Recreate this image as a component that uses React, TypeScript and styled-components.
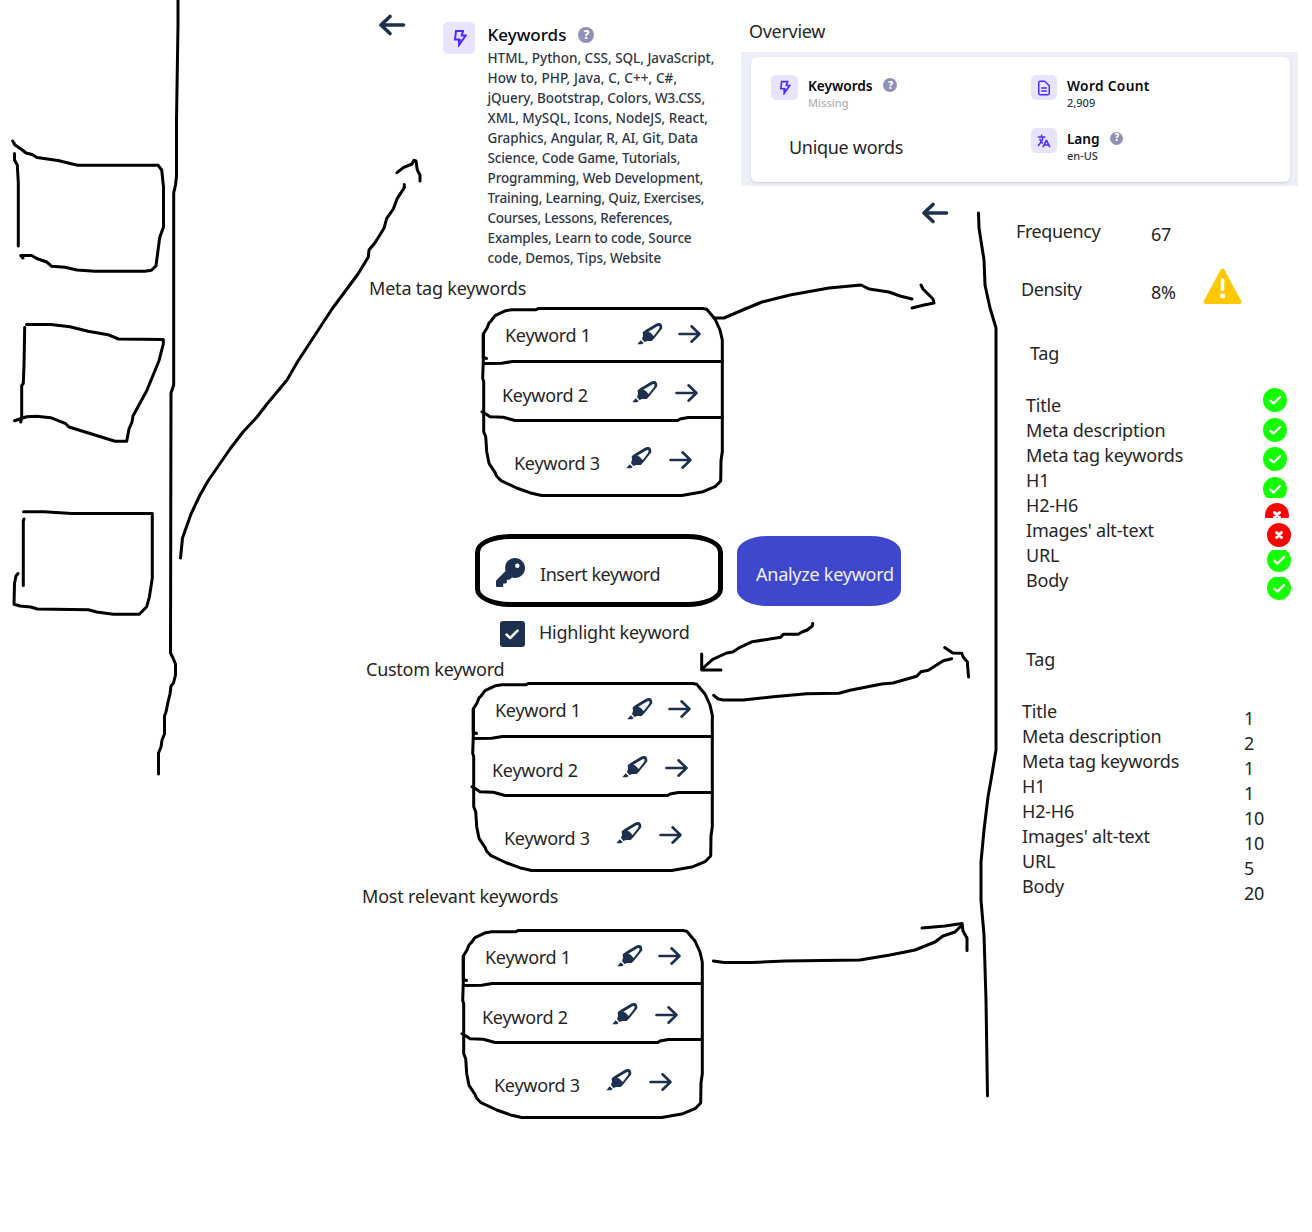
import React from "react";
import styled, { createGlobalStyle } from "styled-components";
import { FaKey } from "react-icons/fa6";
import { HiOutlineDocumentText, HiTranslate } from "react-icons/hi";

const NAVY = "#1d3050";
const VIOLET = "#4a2cff";

const GlobalStyle = createGlobalStyle`
  * { box-sizing: border-box; }
  body { margin: 0; background: #fff; }
`;

const Board = styled.main`
  position: relative;
  display: grid;
  grid-template-columns: 360px 381px 571px;
  width: 1312px;
  height: 1232px;
  overflow: hidden;
  background: #fff;
  color: #262626;
  font-family: "Noto Sans", "Open Sans", sans-serif;
`;

const InkLayer = styled.svg`
  position: absolute;
  inset: 0;
  fill: none;
  stroke: #000;
  stroke-width: 3;
  stroke-linecap: round;
  stroke-linejoin: round;
  pointer-events: none;
`;

const Column = styled.section`
  display: flex;
  flex-direction: column;
  min-width: 0;
`;

const Label = styled.div<{ $x?: number; $top?: number; $tone?: string; $track?: number }>`
  flex: none;
  margin-left: ${(p) => p.$x ?? 0}px;
  margin-top: ${(p) => p.$top ?? 0}px;
  color: ${(p) => p.$tone ?? "#262626"};
  font-size: 18px;
  line-height: 25px;
  letter-spacing: ${(p) => p.$track ?? -0.2}px;
  white-space: nowrap;
`;

/* ---------- Keywords summary ---------- */

const Summary = styled.div`
  display: flex;
  align-items: flex-start;
  height: 276px;
  padding: 14px 0 0 18px;
`;

const IconTile = styled.div<{ $w: number; $h: number; $top?: number }>`
  display: flex;
  flex: none;
  align-items: center;
  justify-content: center;
  width: ${(p) => p.$w}px;
  height: ${(p) => p.$h}px;
  margin-top: ${(p) => p.$top ?? 0}px;
  border-radius: 5px;
  background: #e8e4ff;
  color: ${VIOLET};
`;

const SummaryTile = styled(IconTile)`
  margin-left: 37px;
  padding: 0 0 1px 1px;
`;

const SummaryBody = styled.div`
  margin: 7px 0 0 12.5px;
`;

const SummaryHead = styled.div`
  display: flex;
  align-items: center;
  gap: 12px;
  height: 27px;
  color: #050510;
  font-size: 17px;
  font-weight: 500;
  letter-spacing: 0;
`;

const SummaryLine = styled.div<{ $track: number }>`
  color: #2f3747;
  font-size: 13.5px;
  font-weight: 500;
  line-height: 20px;
  letter-spacing: ${(p) => p.$track}px;
  white-space: nowrap;
`;

const Help = styled.span<{ $size: number }>`
  display: flex;
  flex: none;
  align-items: center;
  justify-content: center;
  width: ${(p) => p.$size}px;
  height: ${(p) => p.$size}px;
  border-radius: 50%;
  background: #9390b8;
  color: #fff;
  font-size: ${(p) => p.$size * 0.75}px;
  font-weight: 800;
  line-height: 1;
`;

/* ---------- Keyword list ---------- */

const ListBox = styled.div<{ $x: number; $top: number }>`
  position: relative;
  display: grid;
  grid-template-rows: 55px 57px 77px;
  flex: none;
  width: 242px;
  height: 189px;
  margin: ${(p) => p.$top}px 0 0 ${(p) => p.$x}px;
`;

const ListOutline = styled.svg`
  position: absolute;
  left: -3px;
  top: -3px;
  fill: none;
  stroke: #000;
  stroke-width: 3;
  stroke-linecap: round;
  stroke-linejoin: round;
`;

const ListRow = styled.div<{ $x: number; $top: number; $labelWidth: number; $gap: number }>`
  display: grid;
  grid-template-columns: ${(p) => p.$labelWidth}px ${(p) => 26 + p.$gap}px 24px;
  align-items: start;
  padding: ${(p) => p.$top}px 0 0 ${(p) => p.$x}px;
`;

const IconSlot = styled.span<{ $drop: number }>`
  display: flex;
  margin-top: ${(p) => p.$drop}px;
  color: ${NAVY};
`;

/* ---------- Keyword form ---------- */

const FormRow = styled.div`
  display: flex;
  flex: none;
  width: 426px;
  margin: 38px 0 0 115px;
`;

const InsertField = styled.div`
  display: flex;
  align-items: center;
  width: 248px;
  height: 73px;
  padding: 4px 0 0 16px;
  border: 5px solid #000;
  border-radius: 36px / 18px;
  color: ${NAVY};
`;

const AnalyzeButton = styled.button`
  display: flex;
  align-items: center;
  width: 164px;
  height: 70px;
  margin: 2px 0 0 14px;
  padding: 7px 0 0 19px;
  border: 0;
  border-radius: 30px / 16px;
  background: #3f48cc;
  font-family: inherit;
`;

const HighlightRow = styled.div`
  display: flex;
  flex: none;
  height: 26px;
  margin: 14px 0 0 139.5px;
`;

const CheckSquare = styled.span`
  display: flex;
  align-items: center;
  justify-content: center;
  width: 25.5px;
  height: 26px;
  border-radius: 3px;
  background: ${NAVY};
`;

/* ---------- Overview ---------- */

const OverviewBand = styled.div`
  flex: none;
  width: 557px;
  height: 134px;
  margin-top: 8px;
  padding: 5px 8px 4px 10px;
  background: #eceff7;
`;

const OverviewCard = styled.div`
  display: grid;
  grid-template-columns: 260px 1fr;
  height: 125px;
  padding: 18px 0 0 20px;
  border-radius: 6px;
  background: #fff;
  box-shadow: 0 1px 2px rgba(40, 50, 90, 0.18);
`;

const Metric = styled.div<{ $top?: number }>`
  display: flex;
  align-items: flex-start;
  height: 36px;
  margin-top: ${(p) => p.$top ?? 0}px;
`;

const MetricText = styled.div`
  margin: 0 0 0 10px;
`;

const MetricTitle = styled.div<{ $track?: number }>`
  display: flex;
  align-items: center;
  gap: 11px;
  height: 20px;
  color: #050510;
  font-size: 13.7px;
  font-weight: 600;
  letter-spacing: ${(p) => p.$track ?? 0}px;
`;

const MetricValue = styled.div<{ $muted?: boolean }>`
  color: ${(p) => (p.$muted ? "#b0b0b0" : "#2f3747")};
  font-size: 11px;
  font-weight: 500;
  line-height: 15px;
`;

/* ---------- Details ---------- */

const BackRow = styled.div`
  height: 22px;
  margin: 16px 0 0 180px;
`;

const StatRow = styled.div<{ $x: number; $top: number; $labelWidth: number }>`
  display: grid;
  grid-template-columns: ${(p) => p.$labelWidth}px 52px 40px;
  flex: none;
  height: 28px;
  margin: ${(p) => p.$top}px 0 0 ${(p) => p.$x}px;
`;

const WarningIcon = styled.svg`
  margin-top: -10px;
`;

const TagTable = styled.div<{ $x: number; $top: number }>`
  display: flex;
  align-items: flex-start;
  flex: none;
  height: 216px;
  margin: ${(p) => p.$top}px 0 0 ${(p) => p.$x}px;
`;

const TagNames = styled.div<{ $w: number }>`
  width: ${(p) => p.$w}px;
`;

const TagLine = styled(Label)`
  line-height: 24.93px;
`;

const Values = styled.div`
  padding-top: 7px;
`;

const StatusColumn = styled.div`
  margin-top: -5px;
`;

const StatusClip = styled.div<{ $x: number; $gap: number; $h: number; $skip: number }>`
  width: 24px;
  height: ${(p) => p.$h}px;
  margin: ${(p) => p.$gap}px 0 0 ${(p) => p.$x}px;
  overflow: hidden;
  svg {
    display: block;
    margin-top: ${(p) => -p.$skip}px;
  }
`;

const BackArrow = () => (
  <svg width="28" height="22" viewBox="0 0 28 22" fill="none" stroke={NAVY} strokeWidth="3.6" strokeLinecap="round" strokeLinejoin="round">
    <path d="M25.5 11H3M12 2.5L3 11l9 8.5" />
  </svg>
);

const ForwardArrow = () => (
  <svg width="24" height="20" viewBox="0 0 24 20" fill="none" stroke={NAVY} strokeWidth="2.6" strokeLinecap="round" strokeLinejoin="round">
    <path d="M1.5 10H21.500M13.500 2.300L21.500 10l-8 7.700" />
  </svg>
);

const Marker = () => (
  <svg width="26" height="24" viewBox="0 0 78 72" fill={NAVY}>
    <path d="M1 67l10-12 9 8-5 4z" />
    <path
      fillRule="evenodd"
      d="M15 51l3-9-1-11 10-8L57 5q8-4 14-1 6 4 5 15L52 49l-8 8H31l-9 3zM34 29l7 3 4 5 5 5 16-21q3-6 1-8-3-2-8 1z"
    />
  </svg>
);

const Bolt = ({ w, h }: { w: number; h: number }) => (
  <svg width={w} height={h} viewBox="0 0 14 18" fill="none" stroke="currentColor" strokeWidth="2" strokeLinejoin="miter">
    <path d="M3 2h7L8.700 6.600h4L6 16v-5.500H2z" />
    <path d="M6 10.500l2.500-.4L6 16z" fill="currentColor" stroke="none" />
  </svg>
);

const StatusIcon = ({ ok }: { ok: boolean }) => (
  <svg width="24" height="24" viewBox="0 0 24 24" fill="none" stroke="#fff" strokeWidth="2.300" strokeLinecap="round" strokeLinejoin="round">
    <circle cx="12" cy="12" r="12" fill={ok ? "#14ff00" : "#ff0000"} stroke="none" />
    {ok ? <path d="M7.500 12.800l3 2.700 6.500-6.500" /> : <path strokeWidth="3" d="M9.500 9.500l5 5M14.500 9.500l-5 5" />}
  </svg>
);

const rows = [
  { name: "Keyword 1", x: 24, top: 15, label: 132, gap: 15, labelDrop: 1, pen: 0, arrow: 2 },
  { name: "Keyword 2", x: 21, top: 18, label: 130, gap: 17, labelDrop: 3, pen: 0, arrow: 3 },
  { name: "Keyword 3", x: 33, top: 29, label: 112, gap: 17, labelDrop: 3, pen: -2, arrow: 2 },
];

const KeywordList = ({ x, top }: { x: number; top: number }) => (
  <ListBox $x={x} $top={top}>
    <ListOutline width="250" height="196" viewBox="478 304 250 196">
      <path d="M538.300 308.700L536 309.700H511.700L505.700 310.700 495 315.700 491 321 489 323 487 328 483.300 334V357.300L486.500 358.500" />
      <path d="M483.300 334V360L482.700 378.300 483.700 381.700V431.700L485.700 436.700 486.700 451.700 489 463.300 495 472.300 496.500 476 501 480.700 516.700 488 531.700 493.300 541.700 495.500H681.700L703 491.700 715 486.700 720.700 481 721 460.700 722.300 451.700V340L720 330 715 319 706.700 309.300 702.700 308.500H538.300" />
      <path d="M484 363.500L501.700 363.300 512.300 361.500H722" />
      <path d="M482 411.700L486 414 490 416.700 503.300 417.300 515 420.500H677.700L680 419 688.300 417.500H722" />
    </ListOutline>
    {rows.map((r) => (
      <ListRow key={r.name} $x={r.x} $top={r.top} $labelWidth={r.label} $gap={r.gap}>
        <Label $top={r.labelDrop} $track={-0.27}>{r.name}</Label>
        <IconSlot $drop={r.pen}>
          <Marker />
        </IconSlot>
        <IconSlot $drop={r.arrow}>
          <ForwardArrow />
        </IconSlot>
      </ListRow>
    ))}
  </ListBox>
);

const keywordLines: [string, number][] = [
  ["HTML, Python, CSS, SQL, JavaScript,", -0.02],
  ["How to, PHP, Java, C, C++, C#,", 0.1],
  ["jQuery, Bootstrap, Colors, W3.CSS,", -0.06],
  ["XML, MySQL, Icons, NodeJS, React,", -0.04],
  ["Graphics, Angular, R, AI, Git, Data", -0.07],
  ["Science, Code Game, Tutorials,", -0.14],
  ["Programming, Web Development,", -0.11],
  ["Training, Learning, Quiz, Exercises,", -0.18],
  ["Courses, Lessons, References,", -0.27],
  ["Examples, Learn to code, Source", -0.14],
  ["code, Demos, Tips, Website", -0.08],
];

const tags = ["Title", "Meta description", "Meta tag keywords", "H1", "H2-H6", "Images' alt-text", "URL", "Body"];
const counts = [1, 2, 1, 1, 10, 10, 5, 20];

const statuses = [
  { ok: true, x: 0, gap: 0, h: 25, skip: 0 },
  { ok: true, x: 0, gap: 5, h: 24, skip: 0 },
  { ok: true, x: 0, gap: 5, h: 25, skip: 0 },
  { ok: true, x: 0, gap: 5, h: 21, skip: 0 },
  { ok: false, x: 2, gap: 5, h: 15, skip: 0 },
  { ok: false, x: 4, gap: 5, h: 24, skip: 0 },
  { ok: true, x: 4, gap: 3, h: 22, skip: 2 },
  { ok: true, x: 4, gap: 5, h: 23, skip: 1 },
];

const strokes = [
  "M178 0V25L176.500 120V176L175.500 185 173.700 193V385L171 393 170.500 653 173 658 175.500 664V675L173.500 683 171 686 170 694 168 702 166 712 164.500 716V734L162 740 161 747 158.500 753V774",
  "M12.700 141L15 145 21.700 149.500 26 153 32 154.500 37 157.500 58 160.500 77.500 165.300H158L161.700 170 163.500 187V227L159.700 237.500 156 265.700 151.500 270.300 145 271.300H95L77 270 65 267.300 51.700 266.300 46.700 262 36.700 258.500 31.700 255.500H20.700L23 258",
  "M14.500 153.500V160L17.300 165 18.300 183V246",
  "M26.500 324.500H50.700L70 326.700 88 331.300 108 334.700 118.500 339 163.300 339.500V344L159 360.700 146.700 390.700 133 416 132 422 129 429 126.700 441.300H115L91.700 434 69 427 65.700 423.700 50.700 417.700 36.700 416.300 26.700 416.700 14.500 420.700",
  "M24.700 327.500L24 365 23.300 383.300 21.700 385.700V416.700L20.700 422",
  "M23.500 511.700H44L71.700 513.500H152.300V578.300L149.300 597.300 146.700 606.700 139.300 614.300H113.300L96.700 612 88.300 609.700 37.300 609 30.700 607 20 606 14 604.300 14.500 583.300 16 576 18 573.500",
  "M24 519L23.300 521V585.500",
  "M180.500 558L182.500 538 191 514 200 495 208 481 230 449 243 432 257 417 267 404 287 380 298 361 332 309 358 274 368.300 257 369 250 375 242.700 384 228.300 386.700 218.300 393.300 209 397.300 198.300 404.300 187.700V184.500",
  "M397 172.700L403.300 167.700 412 164 414 160.300 416 161 417.300 170 420 175V181",
  "M714 318H724L745 309 762 302 790 295 829 288 861 285 869 289 889 292 900 296 912 299",
  "M921 285L923 289 933 299 934 303 924 305 912 308",
  "M978.500 213L979 228 984 260 985 285 990 308 996 328V750L991 780 988 797 984 830 981 862V900L984 935 986 1000 987.500 1096",
  "M812.700 623.500L812.300 626 807.300 630 802 632 798.300 634.300H783.300L780.700 637.300 752.300 641.700 740 647.300 732.700 652 726.700 653 712.700 659.300 702 669",
  "M701.700 654V670H721",
  "M713.700 695.300L718.300 699 723.300 700H743.300L773.300 696.700 806.700 693.700 839 693.300 850 690.300 881.700 684 893 683 916.700 676.300 921 671.700 928.300 670.300 943.300 660.700 951.700 658.700",
  "M944.700 647.500L952.700 653 961.700 653.300 963.300 657.300 967.300 661.700 968.500 677",
  "M713.500 961L724 962.500H752L785 961 860 960 890 955 915 950 935 942 943 936 955 932 962 925",
  "M922 928L945 926 962 923.500 963 931 967 938V950.500",
];

export default function App() {
  return (
    <>
      <GlobalStyle />
      <Board>
        <InkLayer width="1312" height="1232" viewBox="0 0 1312 1232">
          {strokes.map((d) => (
            <path key={d} d={d} />
          ))}
        </InkLayer>

        <Column />

        <Column>
          <Summary>
            <BackArrow />
            <SummaryTile $w={32} $h={32} $top={8}>
              <Bolt w={14} h={18} />
            </SummaryTile>
            <SummaryBody>
              <SummaryHead>
                Keywords <Help $size={16}>?</Help>
              </SummaryHead>
              {keywordLines.map(([line, track]) => (
                <SummaryLine key={line} $track={track}>
                  {line}
                </SummaryLine>
              ))}
            </SummaryBody>
          </Summary>

          <Label $x={9}>Meta tag keywords</Label>
          <KeywordList x={121} top={6} />

          <FormRow>
            <InsertField>
              <FaKey size={29} />
              <Label $x={15} $top={4} $track={-0.45}>Insert keyword</Label>
            </InsertField>
            <AnalyzeButton>
              <Label $tone="#f0f0fb" $track={-0.25}>Analyze keyword</Label>
            </AnalyzeButton>
          </FormRow>
          <HighlightRow>
            <CheckSquare>
              <svg width="14" height="11" viewBox="0 0 14 11" fill="none" stroke="#fff" strokeWidth="2.500" strokeLinecap="round" strokeLinejoin="round">
                <path d="M1.500 5.500l3.700 3.500L12.500 1.700" />
              </svg>
            </CheckSquare>
            <Label $x={14} $top={-1} $track={-0.23}>Highlight keyword</Label>
          </HighlightRow>

          <Label $x={6} $top={10} $track={-0.25}>Custom keyword</Label>
          <KeywordList x={111} top={0} />

          <Label $x={2} $top={13}>Most relevant keywords</Label>
          <KeywordList x={101} top={20} />
        </Column>

        <Column>
          <Label $x={8} $top={19} $track={-0.3}>Overview</Label>
          <OverviewBand>
            <OverviewCard>
              <div>
                <Metric>
                  <IconTile $w={27} $h={25}>
                    <Bolt w={12} h={15} />
                  </IconTile>
                  <MetricText>
                    <MetricTitle $track={-0.05}>
                      Keywords <Help $size={14}>?</Help>
                    </MetricTitle>
                    <MetricValue $muted>Missing</MetricValue>
                  </MetricText>
                </Metric>
                <Label $x={18} $top={24} $track={-0.3}>Unique words</Label>
              </div>
              <div>
                <Metric>
                  <IconTile $w={26} $h={25}>
                    <HiOutlineDocumentText size={18} />
                  </IconTile>
                  <MetricText>
                    <MetricTitle $track={0.35}>Word Count</MetricTitle>
                    <MetricValue>2,909</MetricValue>
                  </MetricText>
                </Metric>
                <Metric $top={17}>
                  <IconTile $w={26} $h={25}>
                    <HiTranslate size={16} />
                  </IconTile>
                  <MetricText>
                    <MetricTitle $track={-0.1}>
                      Lang <Help $size={13}>?</Help>
                    </MetricTitle>
                    <MetricValue>en-US</MetricValue>
                  </MetricText>
                </Metric>
              </div>
            </OverviewCard>
          </OverviewBand>

          <BackRow>
            <BackArrow />
          </BackRow>

          <StatRow $x={275} $top={-5} $labelWidth={135}>
            <Label $track={-0.4}>Frequency</Label>
            <Label $top={3} $track={-0.4}>67</Label>
          </StatRow>
          <StatRow $x={280} $top={30} $labelWidth={130}>
            <Label $track={-0.4}>Density</Label>
            <Label $top={3}>8%</Label>
            <WarningIcon width="39" height="37" viewBox="0 0 39 37">
              <path d="M19.500 3.500L36.500 35H2.500Z" fill="#ffc800" stroke="#ffc800" strokeWidth="4" strokeLinejoin="round" />
              <path d="M19.500 13v9.500" stroke="#fff" strokeWidth="3.600" strokeLinecap="round" />
              <circle cx="19.500" cy="29" r="2.500" fill="#fff" />
            </WarningIcon>
          </StatRow>

          <Label $x={289} $top={36}>Tag</Label>
          <TagTable $x={285} $top={27}>
            <TagNames $w={237}>
              {tags.map((t) => (
                <TagLine key={t}>{t}</TagLine>
              ))}
            </TagNames>
            <StatusColumn>
              {statuses.map((s, i) => (
                <StatusClip key={i} $x={s.x} $gap={s.gap} $h={s.h} $skip={s.skip}>
                  <StatusIcon ok={s.ok} />
                </StatusClip>
              ))}
            </StatusColumn>
          </TagTable>

          <Label $x={285} $top={38}>Tag</Label>
          <TagTable $x={281} $top={27}>
            <TagNames $w={222}>
              {tags.map((t) => (
                <TagLine key={t}>{t}</TagLine>
              ))}
            </TagNames>
            <Values>
              {counts.map((c, i) => (
                <TagLine key={i}>{c}</TagLine>
              ))}
            </Values>
          </TagTable>
        </Column>
      </Board>
    </>
  );
}
